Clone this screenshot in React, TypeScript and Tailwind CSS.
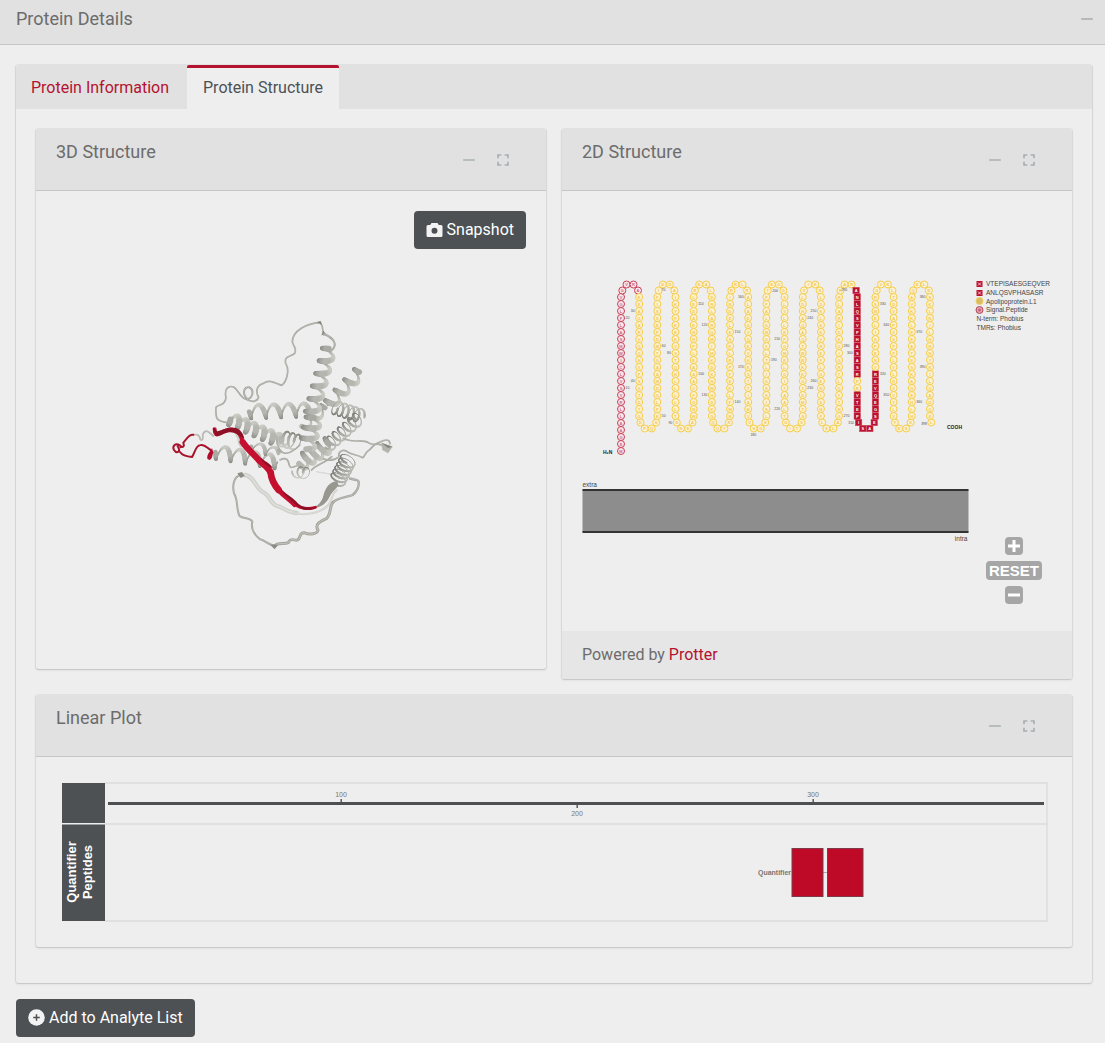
import { useState, type ReactNode } from "react";
import { MdFullscreen, MdRemove } from "react-icons/md";

const SEQUENCE =
  "MEGAALLRVSVLCIWMSALFLGVGVRAEEAGARVQQNVPSGTDTGDPQSKPLGDWAAGTMDPESSIFIEDAIKYFKEKVS" +
  "TQNLLLLLTDNEAWNGFVAAAELPRNEADELRKALDNLARQMIMKDKNWHDKGQQYRNWFLKEFPRLKSELEDNIRRLRA" +
  "LADGVQKVHKGTTIANVVSGSLSISSGILTLVGMGLAPFTEGGSLVLLEPGMELGITAALTGITSSTMDYGKKWWTQAQA" +
  "HDLVIKSLDKLKEVREFLGENISNFLSLAGNTYQLTRGIGKDIRALRRARANLQSVPHASASRPRVTEPISAESGEQVER" +
  "VNEPSILEMSRGVKLTDVAPVSFFLVLDVVYLVYESKHLHEGAKSETAEELKKVAQELEEKLNILNNNYKILQADQEL";

const PEPTIDES = ["VTEPISAESGEQVER", "ANLQSVPHASASR"];
const SIGNAL_END = 27;

// Snake layout: the first column holds 23 residues, every later one 18,
// and each turn between two columns holds 4.
const COLUMN_GAP = 36.35;
const TURN_X = [2.6, 11, 25, 34];
const TURN_Y = [13, 25, 25, 13];

const place = (n: number) => {
  if (n <= 23) return { x: 120, y: 520 - (n - 1) * 14, col: 0, turn: -1 };
  const k = Math.floor((n - 24) / 22);
  const r = (n - 24) % 22;
  const up = k % 2 === 0;
  if (r < 4) {
    return {
      x: 120 + k * COLUMN_GAP + TURN_X[r],
      y: up ? 212 - TURN_Y[r] : 450 + TURN_Y[r],
      col: k,
      turn: r,
    };
  }
  const step = (r - 4) * 14;
  return {
    x: 120 + (k + 1) * COLUMN_GAP,
    y: up ? 212 + step : 450 - step,
    col: k + 1,
    turn: -1,
  };
};

const inPeptide = (n: number) =>
  PEPTIDES.some((p) => {
    const start = SEQUENCE.indexOf(p) + 1;
    return n >= start && n < start + p.length;
  });

const Residue = ({ n, letter }: { n: number; letter: string }) => {
  const { x, y } = place(n);
  const peptide = inPeptide(n);
  const signal = n <= SIGNAL_END;
  return (
    <g>
      {peptide ? (
        <rect x={x - 6.5} y={y - 6.5} width={13} height={13} fill="#bd0f2e" stroke="#cc5068" />
      ) : (
        <circle
          cx={x}
          cy={y}
          r={7}
          fill={signal ? "#f8e6e9" : "#fcf2d2"}
          stroke={signal ? "#c8415a" : "#f5cd4a"}
          strokeWidth={2}
        />
      )}
      <text
        x={x}
        y={y + 3}
        fontSize={8}
        fontWeight={700}
        textAnchor="middle"
        fill={peptide ? "#fff" : signal ? "#d0667a" : "#f0c558"}
      >
        {letter}
      </text>
    </g>
  );
};

const ResidueNumber = ({ n }: { n: number }) => {
  const { x, y, col, turn } = place(n);
  let dx = col % 2 === 0 ? 9 : -9;
  let dy = 2;
  if (turn === 1 || turn === 2) {
    dx = -9;
    dy = col % 2 === 0 ? 13 : 14;
  }
  return (
    <text x={x + dx} y={y + dy} fontSize={7} fill="#555" textAnchor={dx > 0 ? "start" : "end"}>
      {n}
    </text>
  );
};

const SnakePlot = () => (
  <svg
    viewBox="2 0 1020 879"
    className="block w-full font-['Liberation_Sans',sans-serif]"
    role="img"
    aria-label="2D structure"
  >
    {SEQUENCE.split("").map((letter, i) => (
      <Residue key={i} n={i + 1} letter={letter} />
    ))}
    {Array.from({ length: 39 }, (_, i) => (
      <ResidueNumber key={i} n={(i + 1) * 10} />
    ))}
    <text x={732} y={467} fontSize={7} fill="#555" textAnchor="end">398</text>
    <text x={84} y={525} fontSize={10} fontWeight={700} fill="#222">H₂N</text>
    <text x={772} y={476} fontSize={10} fontWeight={700} fill="#222">COOH</text>

    <g fontSize={13} fill="#444">
      {PEPTIDES.map((p, i) => (
        <g key={p}>
          <rect x={831} y={180 + i * 18} width={12} height={12} fill="#bd0f2e" />
          <path d={`M834 ${183 + i * 18}l6 6m0 -6l-6 6`} stroke="#f3c6ce" strokeWidth={2} />
          <text x={850} y={190 + i * 18}>{p}</text>
        </g>
      ))}
      <circle cx={837} cy={220} r={7} fill="#d8bd62" stroke="#eccf68" strokeWidth={2} />
      <text x={850} y={225}>Apolipoprotein.L1</text>
      <circle cx={837} cy={238} r={7} fill="#e3a3ae" stroke="#b04a5c" strokeWidth={2} />
      <circle cx={837} cy={238} r={3} fill="#c4637a" />
      <text x={850} y={242}>Signal.Peptide</text>
      <text x={831} y={260}>N-term: Phobius</text>
      <text x={831} y={278}>TMRs: Phobius</text>
      <text x={43} y={592}>extra</text>
      <text x={813} y={700} textAnchor="end">intra</text>
    </g>
    <rect x={43} y={598} width={772} height={84} fill="#8d8d8d" />
    <path d="M43 598h772M43 682h772" stroke="#333" strokeWidth={4} />
  </svg>
);

type HelixProps = {
  from: [number, number];
  to: [number, number];
  turns: number;
  amp: number;
  width?: number;
  pitch?: number;
  light?: number;
};

// Ribbon coil drawn as short strokes, shaded and widened by depth.
const Helix = ({ from, to, turns, amp, width = 15, pitch = 6, light = 216 }: HelixProps) => {
  const steps = Math.round(turns * 18);
  const length = Math.hypot(to[0] - from[0], to[1] - from[1]);
  const ux = (to[0] - from[0]) / length;
  const uy = (to[1] - from[1]) / length;
  const points = Array.from({ length: steps + 1 }, (_, i) => {
    const a = (i / steps) * turns * 2 * Math.PI;
    const along = (i / steps) * length + Math.cos(a) * pitch;
    const side = Math.sin(a) * amp;
    return { x: from[0] + ux * along - uy * side, y: from[1] + uy * along + ux * side, a };
  });
  const segments = points.slice(1).map((p, i) => ({ p, q: points[i], depth: Math.cos(p.a) }));
  segments.sort((s, t) => s.depth - t.depth);
  return (
    <g strokeLinecap="round">
      {segments.map(({ p, q, depth }, i) => {
        const c = Math.round(light - 48 + depth * 14 - Math.sin(p.a) * 32);
        return (
          <path
            key={i}
            d={`M${q.x.toFixed(1)} ${q.y.toFixed(1)}L${p.x.toFixed(1)} ${p.y.toFixed(1)}`}
            stroke={`rgb(${c},${c},${c - 6})`}
            strokeWidth={(width * (0.66 + 0.34 * depth)).toFixed(1)}
          />
        );
      })}
    </g>
  );
};

const Strand = ({ d, color = "#a3a39c", width = 5 }: { d: string; color?: string; width?: number }) => (
  <g strokeLinecap="round" strokeLinejoin="round">
    <path d={d} stroke={color} strokeWidth={width} />
    <path d={d} stroke="#fff" strokeOpacity={0.35} strokeWidth={width / 3} />
  </g>
);

const RibbonModel = () => (
  <svg viewBox="0 0 786 750" className="w-[262px] max-w-full" fill="none" role="img" aria-label="3D structure">
    <Strand color="#d2d2ce" width={4} d="M470 485C510 495 540 492 590 508" />
    <Strand
      color="#cfcfcb"
      width={13}
      d="M255 495C285 500 285 535 312 548C330 555 330 582 352 588C372 592 380 608 410 609"
    />
    <Strand color="#d0d0cc" width={6} d="M400 609C440 618 485 608 505 585C522 562 512 555 530 540" />
    <Strand
      width={6}
      d="M240 495C222 502 216 525 222 550C235 570 228 595 238 617C250 628 272 622 277 635C272 655 280 672 300 688C318 692 328 708 348 706"
    />
    <Strand
      width={9}
      color="#a4a49c"
      d="M345 708C352 696 372 704 385 698C392 680 405 694 412 690C425 685 415 668 432 668C450 676 472 672 474 660C462 642 485 632 500 625C515 610 508 585 520 576"
    />
    <Strand width={7} d="M520 576C535 562 560 562 578 555C590 545 598 530 596 515C594 508 582 510 570 506" />
    <path d="M232 490l14 -4l8 12l-12 6zM330 704l14 14l10 -14z" fill="#8c8c86" />

    <Strand
      d="M492 75C485 62 492 48 480 38C440 40 398 62 397 95C400 112 412 112 404 130C390 142 372 138 377 160C390 180 380 215 365 226C345 220 330 206 310 220C290 225 286 245 296 262C290 280 270 274 258 268C240 262 235 240 222 232C205 224 192 238 198 262C196 290 172 282 168 292C166 325 168 335 205 338"
    />
    <path d="M470 36l12 -3l4 11zM484 76l14 -4l-8 -10z" fill="#85857f" />
    <Strand width={6} d="M492 72C515 80 530 98 522 112C518 122 515 118 512 125" />
    <Strand width={6} d="M262 268C245 250 252 228 268 232C284 240 278 264 262 268" />

    <Helix from={[160, 426]} to={[358, 458]} turns={4.5} amp={20} />
    <Helix from={[268, 408]} to={[350, 428]} turns={2} amp={14} width={12} />
    <Helix from={[206, 326]} to={[358, 392]} turns={6} amp={18} width={18} />
    <Helix from={[262, 306]} to={[442, 300]} turns={4} amp={20} />
    <Helix from={[602, 182]} to={[500, 290]} turns={3.5} amp={18} width={17} />
    <Helix from={[500, 290]} to={[430, 345]} turns={2} amp={15} />
    <Helix from={[522, 292]} to={[602, 318]} turns={5} amp={21} width={7} pitch={12} light={204} />
    <Helix from={[598, 322]} to={[505, 405]} turns={6} amp={20} width={7} pitch={12} light={204} />
    <Helix from={[512, 400]} to={[422, 458]} turns={4} amp={23} width={17} />
    <Helix from={[508, 110]} to={[452, 318]} turns={5.5} amp={20} width={18} />
    <Helix from={[462, 318]} to={[440, 412]} turns={3} amp={24} width={18} />
    <Helix from={[415, 398]} to={[365, 385]} turns={3} amp={24} width={8} pitch={14} />
    <Helix from={[442, 490]} to={[410, 486]} turns={2} amp={17} width={5} pitch={14} light={215} />
    <Helix from={[566, 446]} to={[532, 512]} turns={6} amp={25} width={6} pitch={14} light={198} />
    <Strand width={4} d="M355 420C375 440 400 425 420 405M350 390C350 410 360 422 372 430" />
    <Strand width={5} d="M360 450C380 440 385 450 388 466C392 478 400 470 410 468M455 480C470 462 495 460 515 440" />
    <path
      d="M532 514C510 515 500 530 492 550C488 572 478 584 462 593C480 595 500 580 510 558C516 545 530 536 535 525Z"
      fill="#97978f"
    />

    <Strand d="M550 385C580 402 605 385 625 398C645 408 650 400 662 395C680 386 690 390 690 402" />
    <Strand d="M665 406C640 395 640 412 625 422C612 432 615 440 608 443C590 432 575 436 560 424C545 415 532 430 538 440C520 455 500 450 490 446" />
    <path d="M664 398L698 410L684 430L667 420Z" fill="#b4b4ad" />
    <path d="M664 398L698 410L684 414Z" fill="#85857f" />
    <Strand d="M220 362C235 375 232 385 240 398M225 362C245 385 225 395 245 410" color="#c2c2bd" />
    <Strand d="M100 375C112 370 120 378 121 388C128 395 130 382 128 374C138 352 150 370 160 378" color="#b0b0a8" />

    <g stroke="#a8122b" strokeWidth={6} strokeLinecap="round" strokeLinejoin="round">
      <path d="M100 374C85 372 80 388 70 398C75 415 66 412 60 406C45 398 36 408 42 420C50 432 62 426 55 412C48 405 60 400 62 412" />
      <path d="M60 426C68 438 82 440 96 441C105 430 106 405 122 405C135 402 142 415 152 420" />
    </g>
    <path d="M142 446C140 432 152 424 156 414L160 428C156 436 158 446 148 450Z" fill="#b10d2c" />
    <g stroke="#c40f30" strokeLinecap="round" strokeLinejoin="round">
      <path d="M164 358C164 372 170 376 178 371C196 362 206 357 222 360C240 364 244 382 248 396" strokeWidth={12} />
      <path d="M248 396C262 418 282 432 296 450C312 464 326 474 332 488" strokeWidth={19} />
      <path d="M332 488C334 510 342 524 356 540" strokeWidth={20} />
      <path d="M356 540C374 560 390 568 404 584" strokeWidth={15} />
      <path d="M400 580C418 594 440 600 466 592" strokeWidth={9} />
    </g>
    <path
      d="M158 354C164 350 166 362 172 364C190 360 202 350 220 353C240 354 250 370 253 386C240 380 226 364 206 367C190 370 180 380 166 378Z"
      fill="#8f1026"
    />
    <path
      d="M300 442C314 454 330 460 338 474C326 474 310 458 300 442ZM362 540C376 550 392 558 408 574C422 592 440 596 470 590C458 603 436 602 424 596C402 582 380 562 362 540Z"
      fill="#8f1026"
    />
  </svg>
);

const SLOPE = 2.36;
const residueX = (n: number) => 69 + n * SLOPE;

const LinearPlot = () => (
  <svg
    viewBox="-1 0 1036 190"
    className="block w-full font-['Liberation_Sans',sans-serif]"
    role="img"
    aria-label="Linear plot"
  >
    <path d="M68 26H1010V164H68M68 67H1010" fill="none" stroke="#dcdcdc" strokeWidth={1.5} />
    <rect x={25} y={26} width={43} height={40} fill="#4d5154" />
    <rect x={25} y={67.5} width={43} height={96.5} fill="#4d5154" />
    <g fill="#fff" fontSize={13} fontWeight={700} textAnchor="middle">
      <text transform="translate(39 115) rotate(-90)">Quantifier</text>
      <text transform="translate(55 115) rotate(-90)">Peptides</text>
    </g>
    <rect x={71} y={45} width={936} height={3} fill="#4d4f50" />
    {[100, 200, 300].map((n) => {
      const below = n === 200;
      return (
        <g key={n}>
          <rect x={residueX(n) - 1.5} y={below ? 48 : 42} width={1.4} height={3} fill="#4d4f50" />
          <text x={residueX(n) - 1} y={below ? 59 : 40} fontSize={7} fill="#777" textAnchor="middle">
            {n}
          </text>
        </g>
      );
    })}
    <text x={754} y={118} fontSize={7} fontWeight={700} fill="#777" textAnchor="end">Quantifier</text>
    <path d="M786 115.500h4" stroke="#aaa" />
    <g fill="#bf0a27" stroke="#7d3a48">
      <rect x={755} y={91.5} width={31} height={48} />
      <rect x={790.5} y={91.5} width={35.5} height={48} />
    </g>
  </svg>
);

const IconButton = ({ label, children }: { label: string; children: ReactNode }) => (
  <button
    type="button"
    aria-label={label}
    className="flex h-[38px] w-[34px] items-center justify-center text-xl text-[#a9afb1]"
  >
    {children}
  </button>
);

const Panel = ({ title, children, footer }: { title: string; children: ReactNode; footer?: ReactNode }) => (
  <section className="min-w-0 overflow-hidden rounded border border-[#d9d9d9] border-t-[#e1e1e1] border-b-[#c9c9c9] bg-[#eee] shadow-xs">
    <header className="flex items-start justify-between border-b border-[#c6c6c6] bg-[#e1e1e1] pt-3 pr-[26px] pb-[11px] pl-5">
      <h2 className="text-lg leading-[22px] text-[#6c6c6c]">{title}</h2>
      <div className="flex">
        <IconButton label={`Collapse ${title}`}>
          <MdRemove />
        </IconButton>
        <IconButton label={`Expand ${title}`}>
          <MdFullscreen />
        </IconButton>
      </div>
    </header>
    {children}
    {footer}
  </section>
);

const DarkButton = ({ children }: { children: ReactNode }) => (
  <button
    type="button"
    className="flex h-[38px] items-center gap-1 rounded bg-[#4d5154] px-3 text-base text-white"
  >
    {children}
  </button>
);

const CameraIcon = () => (
  <svg viewBox="0 0 17 16" className="h-4 w-[17px]" fill="#f3f3f3" aria-hidden="true">
    <path
      fillRule="evenodd"
      d="M5.500 1h6l1.300 2H15a1.500 1.500 0 0 1 1.500 1.500v9A1.500 1.500 0 0 1 15 15H2A1.500 1.500 0 0 1 .5 13.500v-9A1.500 1.500 0 0 1 2 3h2.200zM8.500 5.800a3 3 0 1 0 0 6a3 3 0 0 0 0-6z"
    />
  </svg>
);

const PlusIcon = () => (
  <svg viewBox="0 0 17 17" className="h-[17px] w-[17px]" aria-hidden="true">
    <circle cx={8.5} cy={8.5} r={8.3} fill="#f3f3f3" />
    <path d="M8.500 5.200v6.600M5.200 8.500h6.600" stroke="#4d5154" strokeWidth={1.5} />
  </svg>
);

const ZoomButton = ({ label, d }: { label: string; d: string }) => (
  <button type="button" aria-label={label} className="h-[18px] w-[18px] rounded bg-[#a6a6a6]">
    <svg viewBox="0 0 18 18" stroke="#fff" strokeWidth={3}>
      <path d={d} />
    </svg>
  </button>
);

const TABS = ["Protein Information", "Protein Structure"];

export default function App() {
  const [tab, setTab] = useState(TABS[1]);

  return (
    <main className="min-h-screen bg-[#eee] font-[Roboto,sans-serif] text-[#6c6c6c]">
      <header className="flex items-start justify-between border-b border-[#c6c6c6] bg-[#e1e1e1] pt-2 pr-2 pb-[14px] pl-4">
        <h1 className="text-lg leading-[22px]">Protein Details</h1>
        <button type="button" aria-label="Collapse" className="flex h-[22px] items-center text-xl text-[#b0b0b0]">
          <MdRemove />
        </button>
      </header>

      <div className="pt-[19px] pr-3 pb-1.5 pl-[15px]">
        <div className="overflow-hidden rounded border border-[#d6d6d6] border-t-[#e1e1e1] border-b-[#c9c9c9] shadow-xs">
          <div role="tablist" className="flex h-11 bg-[#e1e1e1]">
            {TABS.map((name) => (
              <button
                key={name}
                type="button"
                role="tab"
                aria-selected={tab === name}
                onClick={() => setTab(name)}
                className={
                  tab === name
                    ? "rounded-t-xs border-t-3 border-[#b5122f] bg-[#eee] px-4 pb-0.5 text-base text-[#4d5154]"
                    : "border-t-3 border-transparent px-4 pb-0.5 text-base text-[#b5122f] first:pl-[15px] first:pr-[18px]"
                }
              >
                {name}
              </button>
            ))}
          </div>

          <div className="px-[19px] pt-[19px] pb-[35px]">
            <div className="grid grid-cols-2 items-start gap-[14px]">
              <Panel title="3D Structure">
                <div className="flex justify-end px-5 pt-5">
                  <DarkButton>
                    <CameraIcon />
                    Snapshot
                  </DarkButton>
                </div>
                <div className="flex justify-center pt-[61px] pb-[109px]">
                  <RibbonModel />
                </div>
              </Panel>

              <Panel
                title="2D Structure"
                footer={
                  <footer className="bg-[#e6e6e6] px-5 py-3 text-base">
                    Powered by{" "}
                    <a href="#protter" className="text-[#b5122f]">
                      Protter
                    </a>
                  </footer>
                }
              >
                <div className="relative">
                  <SnakePlot />
                  <div className="absolute right-[30px] bottom-[27px] flex flex-col items-center gap-1.5">
                    <ZoomButton label="Zoom in" d="M9 3v12M3 9h12" />
                    <button
                      type="button"
                      className="h-[19px] w-14 rounded bg-[#a6a6a6] font-['Liberation_Sans',sans-serif] text-[15px] leading-[19px] font-bold text-white"
                    >
                      RESET
                    </button>
                    <ZoomButton label="Zoom out" d="M3 9h12" />
                  </div>
                </div>
              </Panel>
            </div>

            <div className="pt-[14px]">
              <Panel title="Linear Plot">
                <LinearPlot />
              </Panel>
            </div>
          </div>
        </div>

        <div className="flex pt-[15px] pl-px">
          <DarkButton>
            <PlusIcon />
            Add to Analyte List
          </DarkButton>
        </div>
      </div>
    </main>
  );
}
